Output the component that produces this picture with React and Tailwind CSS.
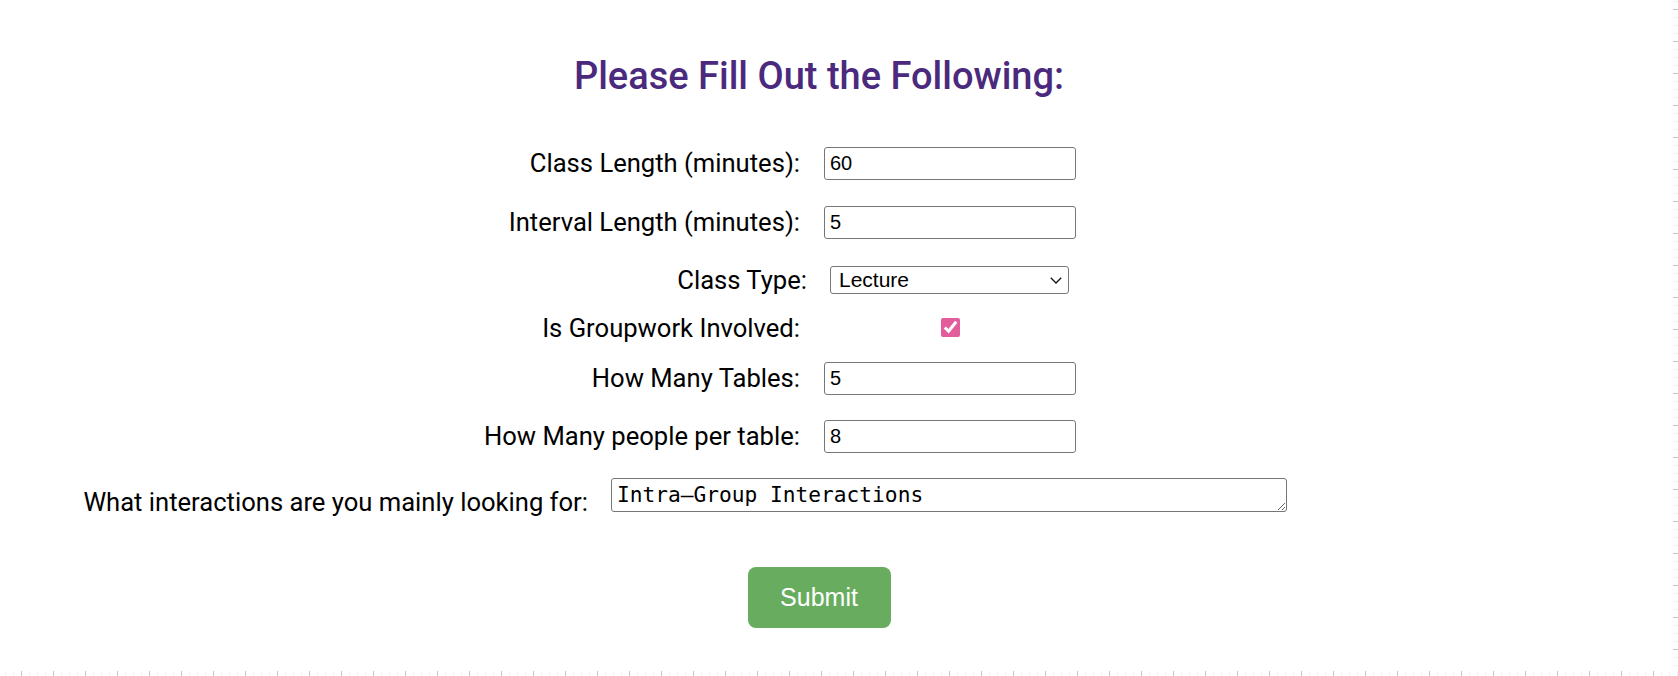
import { useState } from "react";

const labelCls = "text-right text-[25.6px] leading-[29px] text-black";
const inputCls =
  "ml-[24px] w-[252px] h-[33px] border border-[#767676] rounded-[3px] pl-[5px] text-[20px] font-['Liberation_Sans',Arial,sans-serif] text-black outline-none";

export default function App() {
  const [form, setForm] = useState({
    classLength: "60",
    interval: "5",
    classType: "Lecture",
    groupwork: true,
    tables: "5",
    perTable: "8",
    interactions: "Intra–Group Interactions",
  });

  const set = (key) => (e) => setForm((f) => ({ ...f, [key]: e.target.value }));

  return (
    <div className="h-[676px] flex flex-col bg-white overflow-hidden font-[Roboto,sans-serif]">
      <div className="flex flex-1 min-h-0">
        <form className="w-[1638px] pt-[54px]" onSubmit={(e) => e.preventDefault()}>
          <h1 className="text-center text-[38px] leading-[44px] font-medium text-[#4b2a7e]">
            Please Fill Out the Following:
          </h1>

          <div className="mt-[49px] flex items-center h-[33px]">
            <label className={`w-[800px] ${labelCls}`}>Class Length (minutes):</label>
            <input className={inputCls} value={form.classLength} onChange={set("classLength")} />
          </div>

          <div className="mt-[26px] flex items-center h-[33px]">
            <label className={`w-[800px] ${labelCls}`}>Interval Length (minutes):</label>
            <input className={inputCls} value={form.interval} onChange={set("interval")} />
          </div>

          <div className="mt-[27px] flex items-center h-[28px]">
            <label className={`w-[807px] ${labelCls}`}>Class Type:</label>
            <div className="relative ml-[23px]">
              <select
                className="appearance-none w-[239px] h-[28px] border border-[#767676] rounded-[3px] pl-[8px] text-[21px] leading-[24px] font-['Liberation_Sans',Arial,sans-serif] text-black bg-white outline-none"
                value={form.classType}
                onChange={set("classType")}
              >
                <option>Lecture</option>
                <option>Lab</option>
                <option>Seminar</option>
              </select>
              <svg
                className="absolute right-[7px] top-[11px] pointer-events-none"
                width="12"
                height="7"
                viewBox="0 0 12 7"
                fill="none"
              >
                <path d="M0.8 0.8 L6 6 L11.2 0.8" stroke="#111" strokeWidth="1.3" />
              </svg>
            </div>
          </div>

          <div className="mt-[20px] flex items-center h-[29px]">
            <label className={`w-[800px] ${labelCls}`}>Is Groupwork Involved:</label>
            <div className="ml-[24px] w-[252px] flex justify-center pb-[2px]">
              <input
                type="checkbox"
                className="w-[19px] h-[19px] accent-[#e35d9c]"
                checked={form.groupwork}
                onChange={(e) => setForm((f) => ({ ...f, groupwork: e.target.checked }))}
              />
            </div>
          </div>

          <div className="mt-[19px] flex items-center h-[33px]">
            <label className={`w-[800px] ${labelCls}`}>How Many Tables:</label>
            <input className={inputCls} value={form.tables} onChange={set("tables")} />
          </div>

          <div className="mt-[25px] flex items-center h-[33px]">
            <label className={`w-[800px] ${labelCls}`}>How Many people per table:</label>
            <input className={inputCls} value={form.perTable} onChange={set("perTable")} />
          </div>

          <div className="mt-[25px] flex items-start h-[34px]">
            <label className={`w-[588px] mt-[10px] ${labelCls}`}>What interactions are you mainly looking for:</label>
            <textarea
              className="ml-[23px] w-[676px] h-[34px] border border-[#767676] rounded-[3px] pl-[5px] pt-[4px] text-[21.2px] leading-[24px] font-['DejaVu_Sans_Mono',monospace] text-black outline-none"
              value={form.interactions}
              onChange={set("interactions")}
            />
          </div>

          <button className="block mx-auto mt-[55px] w-[143px] h-[61px] rounded-[8px] bg-[#68ad5f] text-white text-[25px] font-['Liberation_Sans',Arial,sans-serif]">
            Submit
          </button>
        </form>
        <div className="ml-auto w-[5px] bg-[image:repeating-linear-gradient(to_bottom,transparent_0_9px,#c4c4c4_9px_10px,transparent_10px_32px),repeating-linear-gradient(to_bottom,transparent_0_1px,#f2f2f2_1px_2px,transparent_2px_8px)]" />
      </div>
      <div className="h-[5px] bg-[image:repeating-linear-gradient(to_right,transparent_0_21px,#c4c4c4_21px_22px,transparent_22px_32px),repeating-linear-gradient(to_right,transparent_0_5px,#f2f2f2_5px_6px,transparent_6px_8px)]" />
    </div>
  );
}
